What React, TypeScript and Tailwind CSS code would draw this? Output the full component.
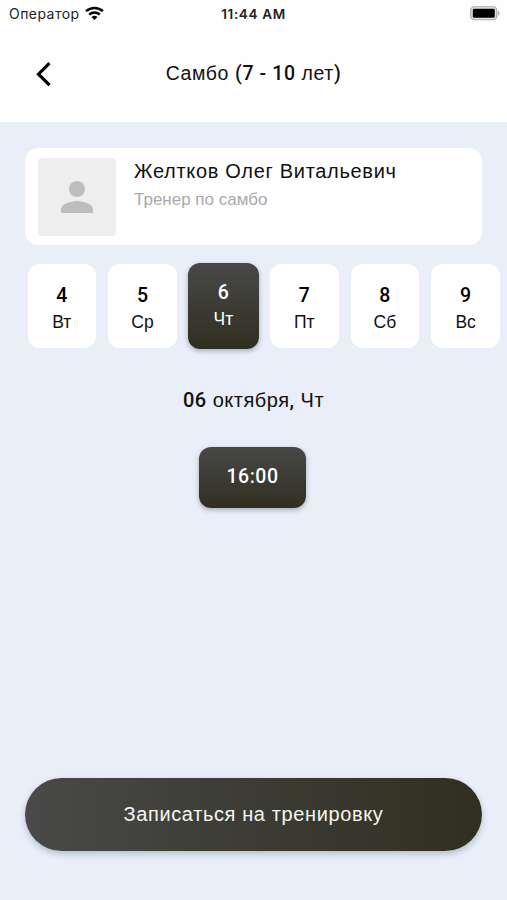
import React from "react";

const days = [
  { date: "4", name: "Вт" },
  { date: "5", name: "Ср" },
  { date: "6", name: "Чт", active: true },
  { date: "7", name: "Пт" },
  { date: "8", name: "Сб" },
  { date: "9", name: "Вс" },
];

function Latin({ children }: { children: React.ReactNode }) {
  return <span className="font-['Roboto',sans-serif] font-medium">{children}</span>;
}

function StatusBar() {
  return (
    <div className="grid h-7 grid-cols-[1fr_auto_1fr] items-center pl-[9px] pr-[7px] text-[#222]">
      <div className="flex items-center gap-[5px]">
        <span className="font-['Inter',sans-serif] text-[14px] leading-7 tracking-[0.45px]">Оператор</span>
        <svg className="-mt-[2px]" width="19" height="15" viewBox="0 0 19 15" fill="none" stroke="#050505" strokeWidth="2.5">
          <path d="M1.1 5.2C5.8 .8 13.2 .8 17.9 5.2" />
          <path d="M4.2 8.6C7.2 5.8 11.8 5.8 14.8 8.6" />
          <path d="M6.5 11C8.2 9.4 10.8 9.4 12.5 11L9.5 14Z" fill="#050505" stroke="none" />
        </svg>
      </div>
      <span className="-ml-[2px] font-['Inter',sans-serif] text-[13.5px] font-semibold leading-7 tracking-[0.65px]">11:44 AM</span>
      <svg className="-mt-[2px] justify-self-end" width="30" height="15" viewBox="0 0 30 15">
        <rect x=".75" y=".75" width="26" height="13" rx="3.6" fill="#e4e4e4" stroke="#aaa" strokeWidth="1.2" />
        <rect x="2.8" y="2.8" width="22" height="9" rx="1.4" fill="#000" />
        <path d="M28 5c2 .7 2 4 0 4.6z" fill="#aaa" />
      </svg>
    </div>
  );
}

export default function App() {
  return (
    <main className="flex h-[900px] w-[507px] flex-col overflow-hidden bg-[#e9eef9] font-['Liberation_Sans',Arial,sans-serif] text-[#111]">
      <header className="h-[122px] shrink-0 bg-[#fefefe]">
        <StatusBar />
        <div className="grid h-[92px] grid-cols-[60px_1fr_60px] items-center">
          <svg className="ml-[34px]" width="17" height="26" viewBox="0 0 17 26" fill="none" stroke="#000" strokeWidth="3.2">
            <path d="M15.5 2.2 4.5 13.2l11 11" />
          </svg>
          <h1 className="-mt-px text-center text-[19.5px] leading-7 tracking-[0.6px] whitespace-nowrap">
            Самбо <Latin>(7 - 10</Latin> лет<Latin>)</Latin>
          </h1>
        </div>
      </header>

      <section className="mx-[25px] mt-[26px] flex h-[97px] shrink-0 rounded-[13px] bg-white pl-[13px] pt-[10px]">
        <div className="flex size-[78px] items-center justify-center rounded-[4px] bg-[#eee]">
          <svg width="32" height="32" viewBox="4 4 16 16" fill="#bdbdbd">
            <path d="M12 12c2.21 0 4-1.79 4-4s-1.79-4-4-4-4 1.79-4 4 1.79 4 4 4zm0 2c-2.67 0-8 1.34-8 4v2h16v-2c0-2.66-5.33-4-8-4z" />
          </svg>
        </div>
        <div className="-mt-px ml-[18px] whitespace-nowrap">
          <h2 className="text-[20px] leading-7 tracking-[0.69px]">Желтков Олег Витальевич</h2>
          <p className="mt-px text-[17px] leading-7 text-[#a9a9a9]">Тренер по самбо</p>
        </div>
      </section>

      <nav className="ml-[27.5px] mt-[17px] flex h-[88px] shrink-0 items-center gap-3">
        {days.map((day) =>
          day.active ? (
            <button
              key={day.date}
              className="-mx-px flex h-[86px] w-[71px] shrink-0 flex-col items-center rounded-[12px] bg-linear-to-b from-[#484848] to-[#302f20] pt-[17px] text-white shadow-[0_2px_5px_rgba(40,45,70,0.35)]"
            >
              <span className="font-['Roboto',sans-serif] text-[19.5px] font-medium leading-[26px]">{day.date}</span>
              <span className="text-[17.5px] leading-[27px]">{day.name}</span>
            </button>
          ) : (
            <button
              key={day.date}
              className="flex h-[84px] w-[68.7px] shrink-0 flex-col items-center rounded-[12px] bg-white pt-[19px]"
            >
              <span className="font-['Roboto',sans-serif] text-[19.5px] font-medium leading-[26px] text-black">{day.date}</span>
              <span className="-mt-px text-[17.5px] leading-[28px]">{day.name}</span>
            </button>
          ),
        )}
      </nav>

      <h3 className="mt-[36px] text-center text-[20px] leading-7 tracking-[0.5px] whitespace-nowrap">
        <Latin>06</Latin> октября<Latin>,</Latin> Чт
      </h3>

      <button className="ml-[199px] mt-[33px] flex h-[61px] w-[107px] shrink-0 items-center justify-center rounded-[12px] bg-linear-to-b from-[#484848] to-[#302f20] pb-px font-['Roboto',sans-serif] text-[19.5px] font-medium tracking-[0.5px] text-white shadow-[0_2px_5px_rgba(40,45,70,0.35)]">
        16:00
      </button>

      <button className="mx-[25px] mb-[49px] mt-auto h-[73px] shrink-0 rounded-full bg-linear-to-r from-[#494949] to-[#302f20] pb-[2px] text-[20px] tracking-[0.62px] whitespace-nowrap text-[#f6f6ef] shadow-[0_3px_6px_rgba(60,80,90,0.3)]">
        Записаться на тренировку
      </button>
    </main>
  );
}
